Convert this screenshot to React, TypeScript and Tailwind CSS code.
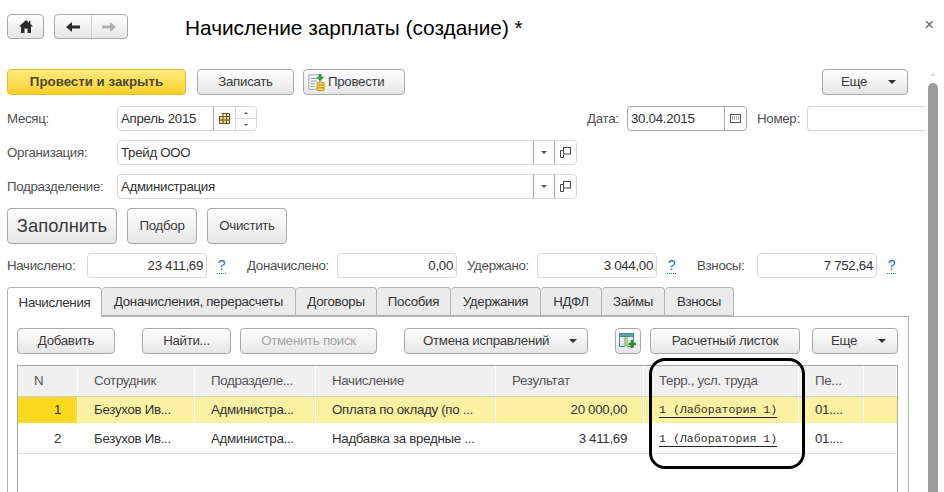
import type { ReactNode } from "react";

const btn =
  "flex items-center justify-center rounded-[4px] border border-[#a8a8a8] bg-gradient-to-b from-white to-[#e6e6e6] text-[#3a3a3a]";

function Caret() {
  return <span className="h-0 w-0 border-x-[4px] border-t-[4px] border-x-transparent border-t-[#333]" />;
}

function SmallCaret() {
  return <span className="h-0 w-0 border-x-[3px] border-t-[3px] border-x-transparent border-t-[#555]" />;
}

function Button({ className, children }: { className: string; children: ReactNode }) {
  return <div className={`${btn} ${className}`}>{children}</div>;
}

function OpenIcon() {
  return (
    <svg width="11" height="11" viewBox="0 0 11 11" fill="none" stroke="#444" strokeWidth="1">
      <rect x="3.5" y="0.5" width="7" height="6.5" fill="#fff" />
      <path d="M3.5 3.5H0.5V10.5H3.5V7.5" />
    </svg>
  );
}

function SelectField({ value }: { value: string }) {
  return (
    <div className="flex h-[25px] w-[460px] items-center rounded-[4px] border border-[#d8d8d8]">
      <span className="flex-1 pl-[3px]">{value}</span>
      <span className="flex h-full w-[21px] items-center justify-center border-l border-[#a8a8a8]">
        <SmallCaret />
      </span>
      <span className="flex h-full w-[22px] items-center justify-center border-l border-[#a8a8a8]">
        <OpenIcon />
      </span>
    </div>
  );
}

function FormRow({ label, children }: { label: string; children: ReactNode }) {
  return (
    <div className="flex items-center">
      <span className="w-[110px] text-[#4f4f4f]">{label}</span>
      {children}
    </div>
  );
}

function Total({ label, labelWidth, value, gap }: { label: string; labelWidth: string; value: string; gap?: boolean }) {
  return (
    <div className="flex items-center">
      <span className={`${labelWidth} text-[#4f4f4f]`}>{label}</span>
      <span className="flex h-[25px] w-[120px] items-center justify-end rounded-[4px] border border-[#d8d8d8] pr-[3px]">
        {value}
      </span>
      {gap && (
        <span className="ml-[10px] w-[9px] border-b border-dotted border-[#1c6fb5] text-center text-[14px] leading-[15px] text-[#1c6fb5]">
          ?
        </span>
      )}
    </div>
  );
}

const tabs = [
  { label: "Доначисления, перерасчеты", w: "w-[194px]" },
  { label: "Договоры", w: "w-[81px]" },
  { label: "Пособия", w: "w-[74px]" },
  { label: "Удержания", w: "w-[90px]" },
  { label: "НДФЛ", w: "w-[61px]" },
  { label: "Займы", w: "w-[63px]" },
  { label: "Взносы", w: "w-[69px]" },
];

const gridCols = "grid grid-cols-[60px_117px_121px_180px_148px_155px_65px_33px]";

const rows = [
  { n: "1", dept: "Оплата по окладу (по ...", sum: "20 000,00", selected: true },
  { n: "2", dept: "Надбавка за вредные ...", sum: "3 411,69", selected: false },
];

const headers = ["N", "Сотрудник", "Подразделе...", "Начисление", "Результат", "Терр., усл. труда", "Пе...", ""];

function Row({ n, dept, sum, selected }: { n: string; dept: string; sum: string; selected: boolean }) {
  const cell = `flex items-center border-r border-white ${selected ? "bg-[#fcf0a2]" : ""}`;
  return (
    <div className={`${gridCols} ${selected ? "h-[28px] border-b-2 border-white" : "h-[29px] border-b border-[#e2e2e2]"}`}>
      <div className={`flex items-center justify-end border-r border-white pr-[16px] ${selected ? "bg-[#fbd91f]" : ""}`}>{n}</div>
      <div className={`${cell} pl-[16px]`}>Безухов Ив...</div>
      <div className={`${cell} pl-[16px]`}>Администра...</div>
      <div className={`${cell} pl-[16px]`}>{dept}</div>
      <div className={`${cell} justify-end pr-[16px]`}>{sum}</div>
      <div className={`${cell} pl-[15px]`}>
        <span className="border-b border-[#222] font-['Liberation_Mono',monospace] text-[11.6px] leading-[14px] tracking-normal text-[#333]">
          1 (Лаборатория 1)
        </span>
      </div>
      <div className={`${cell} pl-[16px]`}>01....</div>
      <div className={selected ? "bg-[#fcf0a2]" : ""} />
    </div>
  );
}

export default function App() {
  return (
    <div className="relative h-[492px] w-[944px] overflow-hidden bg-white font-['Liberation_Sans',Arial,sans-serif] text-[13.3px] leading-none tracking-[-0.3px] text-[#333]">
      {/* title bar */}
      <div className="flex h-[69px] items-start pl-[7px] pr-[10px] pt-[14px]">
        <Button className="h-[25px] w-[37px]">
          <svg width="14" height="13" viewBox="0 0 14 13" fill="#2b2b2b">
            <path d="M7 0L0 6.500H2V13H5.500V8.500H8.500V13H12V6.500H14L11.500 4V1H10V2.700Z" />
          </svg>
        </Button>
        <div className={`${btn} ml-[10px] h-[25px] w-[74px]`}>
          <span className="flex h-full flex-1 items-center justify-center border-r border-[#d0d0d0]">
            <svg width="14" height="10" viewBox="0 0 14 10" fill="#2b2b2b">
              <path d="M0 5L6 0V3.500H14V6.500H6V10Z" />
            </svg>
          </span>
          <span className="flex h-full flex-1 items-center justify-center">
            <svg width="14" height="10" viewBox="0 0 14 10" fill="#b0b0b0">
              <path d="M14 5L8 0V3.500H0V6.500H8V10Z" />
            </svg>
          </span>
        </div>
        <h1 className="ml-[57px] mt-[1px] flex-1 text-[20.8px] leading-[26px] tracking-normal text-black">
          Начисление зарплаты (создание) *
        </h1>
        <span className="mt-[2px] text-[17px] leading-[18px] text-[#666]">×</span>
      </div>

      <div className="flex h-[423px] w-[944px]">
        <div className="w-[925px] pl-[7px]">
          {/* command bar */}
          <div className="flex h-[26px] items-stretch">
            <div className="flex w-[179px] items-center justify-center rounded-[4px] border border-[#e2b93a] bg-gradient-to-b from-[#fdeb7a] to-[#fbcf24] font-bold tracking-normal text-[#4a4a2a]">
              Провести и закрыть
            </div>
            <Button className="ml-[11px] w-[97px]">Записать</Button>
            <Button className="ml-[9px] w-[102px] !justify-start pl-[4px]">
              <svg width="18" height="19" viewBox="0 0 20 19">
                <rect x="1" y="1" width="12" height="16" fill="#fff" stroke="#8a9ab0" />
                <path d="M3 5H10M3 8H10M3 11H8M3 14H7" stroke="#6f86a5" />
                <path d="M12 0H15V3H18L13.500 8L9 3H12Z" fill="#2f9a3a" />
                <ellipse cx="14" cy="11" rx="4.500" ry="2" fill="#f6cf45" stroke="#b98f1f" />
                <ellipse cx="14" cy="14" rx="4.500" ry="2" fill="#f6cf45" stroke="#b98f1f" />
                <ellipse cx="14" cy="17" rx="4.500" ry="1.800" fill="#f6cf45" stroke="#b98f1f" />
              </svg>
              <span className="ml-[2px]">Провести</span>
            </Button>
            <Button className="ml-[417px] w-[86px] !justify-start gap-[21px] pl-[18px]">
              <span>Еще</span>
              <Caret />
            </Button>
          </div>

          {/* date row */}
          <div className="mt-[11px] flex h-[25px] items-center">
            <FormRow label="Месяц:">
              <div className="flex h-[25px] w-[140px] items-center rounded-[4px] border border-[#d8d8d8]">
                <span className="flex-1 pl-[3px]">Апрель 2015</span>
                <span className="flex h-full w-[22px] items-center justify-center border-l border-[#a8a8a8]">
                  <svg width="11" height="11" viewBox="0 0 11 11" fill="#e8d9a0" stroke="#6b5310">
                    <path d="M2.500 .5H10.500V10.500H.5V3.500H10.500M.5 7H10.500M4 .5V10.500M7.500 .5V10.500" />
                  </svg>
                </span>
                <span className="flex h-full w-[21px] flex-col border-l border-[#d8d8d8]">
                  <span className="flex flex-1 items-center justify-center border-b border-[#d8d8d8]">
                    <span className="h-0 w-0 border-x-[2px] border-b-[2px] border-x-transparent border-b-[#555]" />
                  </span>
                  <span className="flex flex-1 items-center justify-center">
                    <span className="h-0 w-0 border-x-[2px] border-t-[2px] border-x-transparent border-t-[#555]" />
                  </span>
                </span>
              </div>
            </FormRow>
            <span className="ml-[330px] w-[40px] text-[#4f4f4f]">Дата:</span>
            <div className="flex h-[25px] w-[120px] items-center rounded-[4px] border border-[#a8a8a8]">
              <span className="flex-1 pl-[3px]">30.04.2015</span>
              <span className="flex h-full w-[22px] items-center justify-center border-l border-[#a8a8a8]">
                <svg width="11" height="9" viewBox="0 0 11 9" fill="none" stroke="#555">
                  <rect x=".5" y=".5" width="10" height="8" />
                  <path d="M2 3H9.500M2 5H9.500" strokeDasharray="1 1" />
                </svg>
              </span>
            </div>
            <span className="ml-[10px] w-[50px] text-[#4f4f4f]">Номер:</span>
            <div className="h-[25px] w-[118px] rounded-l-[4px] border-y border-l border-[#d8d8d8]" />
          </div>

          <div className="mt-[9px]">
            <FormRow label="Организация:">
              <SelectField value="Трейд ООО" />
            </FormRow>
          </div>
          <div className="mt-[9px]">
            <FormRow label="Подразделение:">
              <SelectField value="Администрация" />
            </FormRow>
          </div>

          {/* fill buttons */}
          <div className="mt-[9px] flex h-[36px] items-stretch gap-[10px]">
            <Button className="w-[110px] text-[18.400px] tracking-normal">Заполнить</Button>
            <Button className="w-[70px]">Подбор</Button>
            <Button className="w-[80px]">Очистить</Button>
          </div>

          {/* totals */}
          <div className="mt-[9px] flex h-[25px] items-center">
            <Total label="Начислено:" labelWidth="w-[80px]" value="23 411,69" gap />
            <span className="w-[21px]" />
            <Total label="Доначислено:" labelWidth="w-[90px]" value="0,00" />
            <span className="w-[10px]" />
            <Total label="Удержано:" labelWidth="w-[70px]" value="3 044,00" gap />
            <span className="w-[21px]" />
            <Total label="Взносы:" labelWidth="w-[60px]" value="7 752,64" gap />
          </div>

          {/* tabs */}
          <div className="mt-[9px] flex h-[29px] items-stretch">
            <div className="z-10 -mb-px flex w-[95px] items-center justify-center rounded-t-[4px] border-x border-t border-[#b4b4b4] bg-white">
              Начисления
            </div>
            {tabs.map((tab) => (
              <div
                key={tab.label}
                className={`${tab.w} flex items-center justify-center rounded-t-[4px] border-r border-t border-b border-[#b4b4b4] bg-[#ebebeb]`}
              >
                {tab.label}
              </div>
            ))}
          </div>

          {/* panel */}
          <div className="h-[178px] w-[902px] border-x border-t border-[#b4b4b4] px-[9px] pt-[11px]">
            <div className="flex h-[26px] items-stretch">
              <Button className="w-[98px]">Добавить</Button>
              <Button className="ml-[27px] w-[89px]">Найти...</Button>
              <Button className="ml-[9px] w-[137px] text-[#a3a3a3]">Отменить поиск</Button>
              <Button className="ml-[27px] w-[184px] !justify-start gap-[20px] pl-[18px]">
                <span>Отмена исправлений</span>
                <Caret />
              </Button>
              <Button className="ml-[27px] w-[26px]">
                <svg width="18" height="16" viewBox="0 0 18 16">
                  <rect x=".5" y=".5" width="14" height="13" fill="#dfe9ee" stroke="#4d8a94" />
                  <rect x=".5" y=".5" width="14" height="3" fill="#5fa3ad" stroke="#4d8a94" />
                  <rect x="5" y="4" width="4" height="10" fill="#a9c98a" />
                  <path d="M13 7V15M9.500 11H17" stroke="#2f8f2f" strokeWidth="2.500" />
                </svg>
              </Button>
              <Button className="ml-[9px] w-[150px]">Расчетный листок</Button>
              <Button className="ml-[12px] w-[86px] !justify-start gap-[21px] pl-[18px]">
                <span>Еще</span>
                <Caret />
              </Button>
            </div>

            <div className="mt-[11px] h-[140px] w-[881px] border-x border-t border-[#a8a8a8]">
              <div className={`${gridCols} h-[31px] border-b border-[#d0d0d0] bg-[#f0f0f0] text-[#555]`}>
                {headers.map((h, i) => (
                  <div key={i} className={`flex items-center border-r border-white ${i === 5 ? "pl-[15px]" : "pl-[16px]"}`}>
                    {h}
                  </div>
                ))}
              </div>
              {rows.map((r) => (
                <Row key={r.n} {...r} />
              ))}
            </div>
          </div>
        </div>

        {/* scrollbar */}
        <div className="ml-[3px] flex w-[10px] flex-col items-center">
          <span className="mt-[3px] h-0 w-0 border-x-[3px] border-b-[4px] border-x-transparent border-b-[#e2e2e2]" />
          <div className="mt-[7px] w-full flex-1 rounded-t-[5px] bg-[#9b9b9b]" />
        </div>
      </div>

      {/* hand-drawn callout around the column */}
      <div className="absolute left-[649px] top-[358px] h-[111px] w-[156px] rounded-[16px] border-[3px] border-black" />
    </div>
  );
}
